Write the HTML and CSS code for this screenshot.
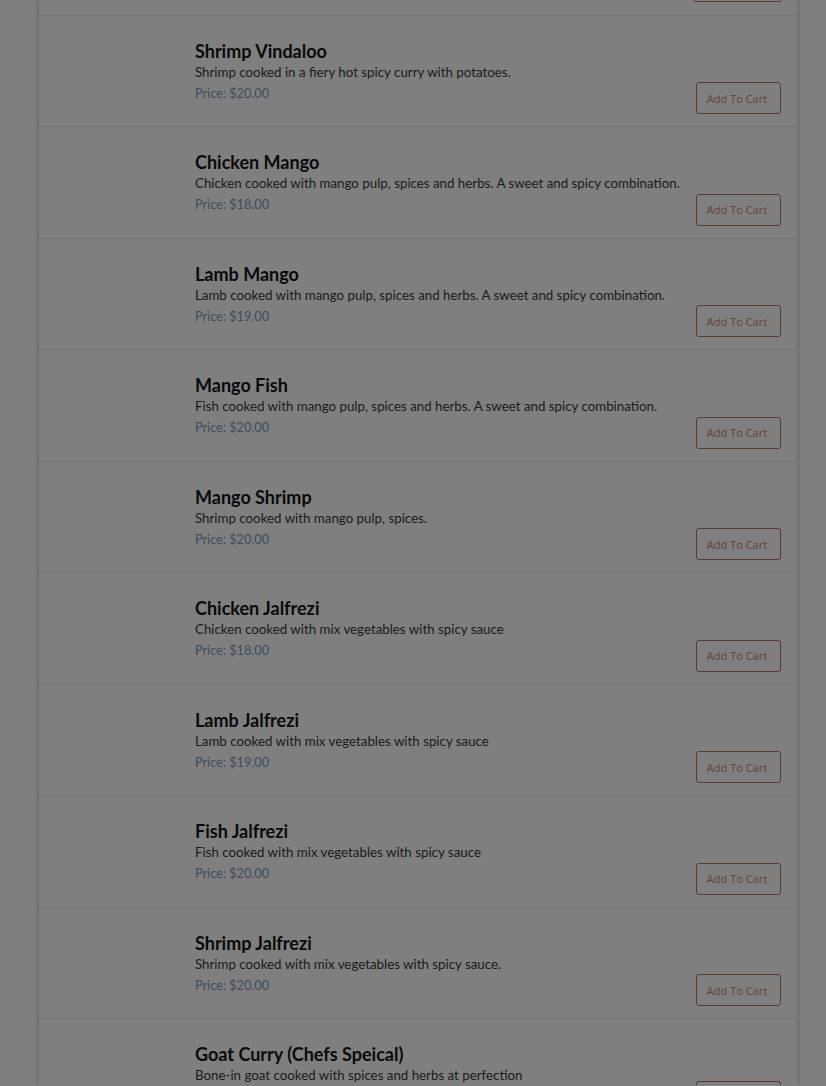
FILE: index.html
```html
<!DOCTYPE html>
<html>
<head>
<meta charset="utf-8">
<link rel="stylesheet" href="styles.css">
</head>
<body>
<div class="page">
  <div class="menu">
    <div class="item tail">
      <span class="cart-edge"></span>
    </div>
    <div class="item">
      <div class="thumb"></div>
      <div class="info">
        <h3 class="name">Shrimp Vindaloo</h3>
        <p class="desc">Shrimp cooked in a fiery hot spicy curry with potatoes.</p>
        <p class="price">Price: $20.00</p>
      </div>
      <button class="cart">Add To Cart</button>
    </div>
    <div class="item">
      <div class="thumb"></div>
      <div class="info">
        <h3 class="name">Chicken Mango</h3>
        <p class="desc">Chicken cooked with mango pulp, spices and herbs. A sweet and spicy combination.</p>
        <p class="price">Price: $18.00</p>
      </div>
      <button class="cart">Add To Cart</button>
    </div>
    <div class="item">
      <div class="thumb"></div>
      <div class="info">
        <h3 class="name">Lamb Mango</h3>
        <p class="desc">Lamb cooked with mango pulp, spices and herbs. A sweet and spicy combination.</p>
        <p class="price">Price: $19.00</p>
      </div>
      <button class="cart">Add To Cart</button>
    </div>
    <div class="item">
      <div class="thumb"></div>
      <div class="info">
        <h3 class="name">Mango Fish</h3>
        <p class="desc">Fish cooked with mango pulp, spices and herbs. A sweet and spicy combination.</p>
        <p class="price">Price: $20.00</p>
      </div>
      <button class="cart">Add To Cart</button>
    </div>
    <div class="item">
      <div class="thumb"></div>
      <div class="info">
        <h3 class="name">Mango Shrimp</h3>
        <p class="desc">Shrimp cooked with mango pulp, spices.</p>
        <p class="price">Price: $20.00</p>
      </div>
      <button class="cart">Add To Cart</button>
    </div>
    <div class="item">
      <div class="thumb"></div>
      <div class="info">
        <h3 class="name">Chicken Jalfrezi</h3>
        <p class="desc">Chicken cooked with mix vegetables with spicy sauce</p>
        <p class="price">Price: $18.00</p>
      </div>
      <button class="cart">Add To Cart</button>
    </div>
    <div class="item">
      <div class="thumb"></div>
      <div class="info">
        <h3 class="name">Lamb Jalfrezi</h3>
        <p class="desc">Lamb cooked with mix vegetables with spicy sauce</p>
        <p class="price">Price: $19.00</p>
      </div>
      <button class="cart">Add To Cart</button>
    </div>
    <div class="item">
      <div class="thumb"></div>
      <div class="info">
        <h3 class="name">Fish Jalfrezi</h3>
        <p class="desc">Fish cooked with mix vegetables with spicy sauce</p>
        <p class="price">Price: $20.00</p>
      </div>
      <button class="cart">Add To Cart</button>
    </div>
    <div class="item">
      <div class="thumb"></div>
      <div class="info">
        <h3 class="name">Shrimp Jalfrezi</h3>
        <p class="desc">Shrimp cooked with mix vegetables with spicy sauce.</p>
        <p class="price">Price: $20.00</p>
      </div>
      <button class="cart">Add To Cart</button>
    </div>
    <div class="item last">
      <div class="thumb"></div>
      <div class="info">
        <h3 class="name">Goat Curry (Chefs Speical)</h3>
        <p class="desc">Bone-in goat cooked with spices and herbs at perfection</p>
      </div>
      <span class="cart-top"></span>
    </div>
  </div>
</div>
</body>
</html>
```

FILE: styles.css
```css
html, body {
  margin: 0;
  padding: 0;
  background: #7f7f7f;
  overflow: hidden;
}
.page {
  padding-left: 38px;
  width: 760px;
}
.menu {
  border-left: 1px solid #747474;
  border-right: 1px solid #747474;
  box-shadow: 0 0 3px rgba(0,0,0,0.25);
  font-family: Lato, "Liberation Sans", sans-serif;
}
.item {
  display: flex;
  align-items: flex-end;
  height: 110.5px;
  box-sizing: content-box;
  border-bottom: 1px solid #737373;
  padding: 0 16px 0 0;
}
.item.tail {
  height: 14.5px;
  justify-content: flex-end;
  align-items: flex-start;
}
.cart-edge {
  width: 85px;
  height: 1px;
  border: 1px solid #5f3a30;
  border-top: none;
  border-radius: 0 0 3px 3px;
}
.item.last {
  height: 66px;
  border-bottom: none;
}
.cart-top {
  flex: none;
  width: 83px;
  height: 3px;
  border: 1px solid #5f3a30;
  border-bottom: none;
  border-radius: 3px 3px 0 0;
}
.thumb {
  width: 156px;
  flex: none;
  align-self: stretch;
}
.info {
  flex: 1;
  align-self: flex-start;
  padding-top: 25px;
}
.name {
  margin: 0;
  font-size: 18px;
  line-height: 20px;
  font-weight: 700;
  color: #0a0a0a;
}
.desc {
  margin: 1px 0 0;
  font-size: 13.3px;
  line-height: 20px;
  color: #1a1a1a;
}
.price {
  margin: 1px 0 0;
  font-size: 12.7px;
  line-height: 20px;
  color: #3c4d60;
}
.cart {
  flex: none;
  margin-bottom: 12px;
  width: 85px;
  height: 32px;
  border: 1px solid #5f3a30;
  border-radius: 3px;
  background: transparent;
  color: #6a4037;
  font-family: "Open Sans", sans-serif;
  font-size: 11px;
  padding: 0 3px 0 0;
}
```
